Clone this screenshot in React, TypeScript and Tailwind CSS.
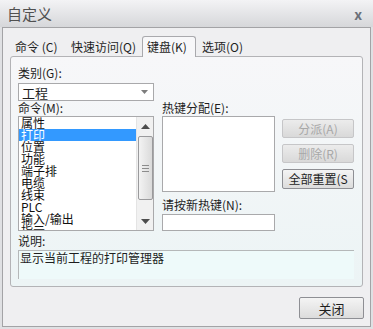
import React from "react";

const font = { fontFamily: '"Noto Sans CJK SC", "Noto Sans", sans-serif' };

const commands = ["属性", "打印", "位置", "功能", "端子排", "电缆", "线束", "PLC", "输入/输出", "指示"];

function Tab({ label, active, className }: { label: string; active?: boolean; className: string }) {
  return (
    <div
      className={
        active
          ? `h-[21px] mt-0 border border-b-0 border-[#a9a9ad] rounded-t-[3px] bg-[#f7f7f9] text-[12px] leading-[19px] text-[#1e1e1e] ${className}`
          : `h-[20px] mt-[1px] text-[12px] leading-[20px] text-[#1e1e1e] ${className}`
      }
    >
      {label}
    </div>
  );
}

function Btn({ label, disabled, className = "" }: { label: string; disabled?: boolean; className?: string }) {
  return (
    <div
      className={`flex items-center justify-center rounded-[2px] border text-[12px] leading-none ${
        disabled
          ? "border-[#c6c6c8] bg-gradient-to-b from-[#ececec] to-[#d9d9d9] text-[#a8a8a8]"
          : "border-[#8e8f94] bg-gradient-to-b from-[#f4f4f4] to-[#dcdcdc] text-[#1e1e1e]"
      } ${className}`}
    >
      {label}
    </div>
  );
}

function Scrollbar() {
  return (
    <div className="w-[17px] h-full flex flex-col items-center bg-[#f1f1f1] border-l border-[#e4e4e4]">
      <div className="h-[19px] flex items-center justify-center">
        <svg width="9" height="5" viewBox="0 0 9 5"><path d="M0 5 L4.5 0 L9 5 Z" fill="#4d4d4d" /></svg>
      </div>
      <div className="w-[15px] h-[64px] rounded-[2px] border border-[#9a9a9c] bg-gradient-to-r from-[#f3f3f3] to-[#dadada] flex flex-col items-center justify-center gap-[2px]">
        <div className="w-[7px] h-px bg-[#8c8c8c]" />
        <div className="w-[7px] h-px bg-[#8c8c8c]" />
        <div className="w-[7px] h-px bg-[#8c8c8c]" />
      </div>
      <div className="flex-1" />
      <div className="h-[18px] flex items-center justify-center">
        <svg width="9" height="5" viewBox="0 0 9 5"><path d="M0 0 L4.5 5 L9 0 Z" fill="#4d4d4d" /></svg>
      </div>
    </div>
  );
}

export default function App() {
  return (
    <div className="w-[373px] h-[329px] flex flex-col bg-[#dfe0e3]" style={font}>
      {/* title bar */}
      <div className="h-[27px] flex items-center justify-between px-[7px] bg-gradient-to-b from-[#f3f3f5] to-[#d6d7da]">
        <span className="text-[15px] leading-none text-[#505050]">自定义</span>
        <span className="text-[14px] font-bold leading-none text-[#6b7079] mr-[4px]">x</span>
      </div>

      {/* client area */}
      <div className="flex-1 mx-[2px] mb-[2px] border border-[#a3a3a6] bg-[#efeff1] flex flex-col">
        <div className="flex ml-[6px] mt-[8px] h-[21px] relative z-10 -mb-px">
          <Tab label="命令 (C)" className="w-[57px] pl-[6px]" />
          <Tab label="快速访问(Q)" className="w-[76px] pl-[5px]" />
          <Tab label="键盘(K)" active className="w-[54px] pl-[4px]" />
          <Tab label="选项(O)" className="w-[54px] pl-[6px]" />
        </div>

        <div className="mx-[7px] h-[231px] border border-[#b3b3b6] rounded-[3px] bg-gradient-to-b from-[#f7f7f9] to-[#ecf4f5] flex flex-col pl-[7px] pt-[9px] text-[12px] text-[#1e1e1e]">
          <div className="leading-[14px]">类别(G):</div>
          <div className="mt-[3px] w-[136px] h-[18px] border border-[#a9a9ab] bg-white flex items-center justify-between pl-[3px] pr-[5px]">
            <span className="text-[13px] leading-none">工程</span>
            <svg width="7" height="4" viewBox="0 0 7 4"><path d="M0 0 L3.5 4 L7 0 Z" fill="#7d7d7d" /></svg>
          </div>

          <div className="flex mt-0">
            <div className="flex flex-col w-[136px]">
              <div className="leading-[14px]">命令(M):</div>
              <div className="mt-px h-[115px] border border-[#a9a9ab] bg-white flex overflow-hidden">
                <div className="flex-1 flex flex-col overflow-hidden">
                  {commands.map((c, i) => (
                    <div
                      key={c}
                      className={`shrink-0 h-[12px] leading-[12px] text-[12px] pl-[2px] ${
                        i === 1 ? "bg-[#3399ff] text-white" : "text-[#111]"
                      }`}
                    >
                      {c}
                    </div>
                  ))}
                </div>
                <Scrollbar />
              </div>
            </div>

            <div className="flex flex-col w-[113px] ml-[8px]">
              <div className="leading-[14px]">热键分配(E):</div>
              <div className="mt-px h-[76px] border border-[#a9a9ab] bg-white" />
              <div className="mt-[6px] leading-[14px]">请按新热键(N):</div>
              <div className="mt-[2px] h-[17px] border border-[#a9a9ab] bg-white" />
            </div>

            <div className="flex flex-col ml-[7px] mt-[18px] gap-[6px]">
              <Btn label="分派(A)" disabled className="w-[72px] h-[19px]" />
              <Btn label="删除(R)" disabled className="w-[72px] h-[19px]" />
              <Btn label="全部重置(S" className="w-[72px] h-[20px]" />
            </div>
          </div>

          <div className="mt-[3px] leading-[14px]">说明:</div>
          <div className="mt-[2px] w-[336px] h-[29px] border-t border-l border-[#b5b8b9] bg-[#eefafa] pl-[1px] text-[12px] leading-[14px]">
            显示当前工程的打印管理器
          </div>
        </div>

        <div className="flex justify-end mr-[6px] mt-[10px]">
          <Btn label="关闭" className="w-[65px] h-[22px] text-[13px]" />
        </div>
      </div>
    </div>
  );
}
